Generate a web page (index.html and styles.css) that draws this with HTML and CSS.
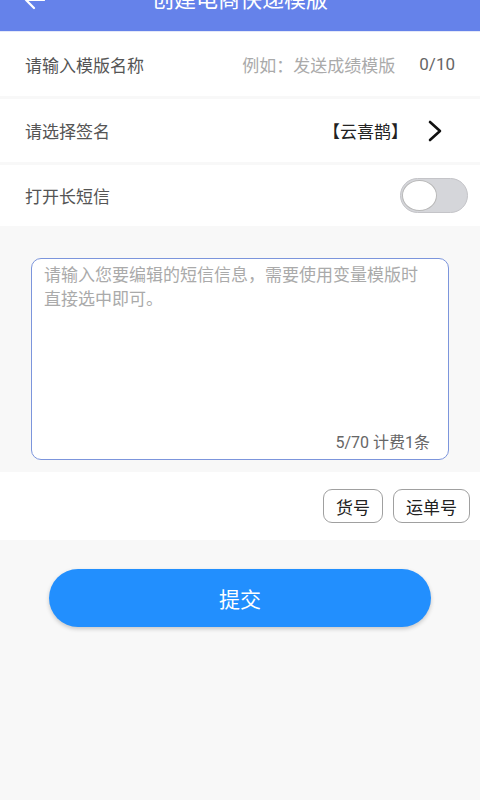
FILE: index.html
```html
<!DOCTYPE html>
<html lang="zh-CN">
<head>
    <meta charset="UTF-8">
    <meta name="viewport" content="width=device-width, initial-scale=1.0">
    <title>创建电商快递模版</title>
    <link rel="stylesheet" href="styles.css">
</head>
<body>
    <header class="top-bar">
        <div class="top-bar-inner">
            <svg class="back-icon" width="22" height="22" viewBox="0 0 22 22">
                <path d="M21 11H3M11 3L3 11L11 19" fill="none" stroke="#fff" stroke-width="2.2" stroke-linecap="round" stroke-linejoin="round"/>
            </svg>
            <h1 class="title">创建电商快递模版</h1>
        </div>
    </header>

    <div class="form-row name-row">
        <span class="row-label">请输入模版名称</span>
        <span class="row-placeholder">例如：发送成绩模版</span>
        <span class="row-count">0/10</span>
    </div>

    <div class="form-row">
        <span class="row-label">请选择签名</span>
        <span class="row-value">【云喜鹊】</span>
        <svg class="chevron" width="16" height="22" viewBox="0 0 16 22">
            <path d="M3 2L13 11L3 20" fill="none" stroke="#111" stroke-width="2.6" stroke-linecap="round" stroke-linejoin="round"/>
        </svg>
    </div>

    <div class="form-row switch-row">
        <span class="row-label">打开长短信</span>
        <div class="switch"><div class="switch-knob"></div></div>
    </div>

    <section class="message-area">
        <div class="message-box">
            <p class="message-placeholder">请输入您要编辑的短信信息，需要使用变量模版时直接选中即可。</p>
            <span class="message-count">5/70 计费1条</span>
        </div>
    </section>

    <div class="tag-row">
        <button class="tag">货号</button>
        <button class="tag">运单号</button>
    </div>

    <div class="submit-wrap">
        <button class="submit">提交</button>
    </div>
</body>
</html>
```

FILE: styles.css
```css
:root {
    --header-color: #6582ea;
    --primary-color: #228ffe;
    --text-color: #555555;
    --muted-color: #aaaaaa;
    --light-bg: #f8f8f8;
    --white: #ffffff;
}

* {
    margin: 0;
    padding: 0;
    box-sizing: border-box;
    font-family: Roboto, "Noto Sans CJK SC", sans-serif;
}

body {
    background-color: var(--light-bg);
    color: var(--text-color);
    min-height: 100vh;
}

.top-bar {
    height: 32px;
    background-color: var(--header-color);
    overflow: hidden;
    display: flex;
    align-items: flex-end;
    border-bottom: 1px solid #e4e8f8;
}

.top-bar-inner {
    width: 100%;
    height: 40px;
    margin-bottom: 11px;
    display: flex;
    align-items: center;
    justify-content: center;
    position: relative;
}

.back-icon {
    position: absolute;
    left: 23px;
    top: 9px;
}

.title {
    color: var(--white);
    font-size: 22px;
    font-weight: 400;
    line-height: 22px;
}

.form-row {
    height: 63px;
    background-color: var(--white);
    display: flex;
    align-items: center;
    padding: 0 25px;
    font-size: 17px;
    margin-bottom: 3px;
}

.name-row {
    height: 64px;
}

.switch-row {
    height: 61px;
    margin-bottom: 0;
}

.row-label {
    flex: 1;
}

.row-placeholder {
    color: var(--muted-color);
    margin-right: 24px;
}

.row-count {
    color: #666666;
}

.row-value {
    color: #222222;
    margin-right: 19px;
}

.chevron {
    margin-right: 12px;
}

.switch {
    width: 68px;
    height: 35px;
    border-radius: 18px;
    background-color: #d5d6da;
    border: 1px solid #c4c4c8;
    margin-right: -13px;
    padding: 1px;
}

.switch-knob {
    width: 35px;
    height: 31px;
    border-radius: 50%;
    background-color: var(--white);
    border: 1px solid #b8b8b8;
}

.message-area {
    padding: 32px 31px 12px;
}

.message-box {
    height: 202px;
    background-color: var(--white);
    border: 1.5px solid #7c95dc;
    border-radius: 10px;
    padding: 4px 18px 6px 12px;
    display: flex;
    flex-direction: column;
    justify-content: space-between;
}

.message-placeholder {
    color: var(--muted-color);
    font-size: 17px;
    line-height: 24px;
}

.message-count {
    align-self: flex-end;
    color: #666666;
    font-size: 16px;
}

.tag-row {
    height: 68px;
    background-color: var(--white);
    display: flex;
    justify-content: flex-end;
    align-items: center;
    gap: 10px;
    padding-right: 10px;
}

.tag {
    height: 34px;
    padding: 0 12px;
    background-color: var(--white);
    border: 1.5px solid #a0a0a0;
    border-radius: 9px;
    color: #222222;
    font-size: 17px;
}

.submit-wrap {
    padding: 29px 49px;
}

.submit {
    width: 100%;
    height: 58px;
    border: none;
    border-radius: 29px;
    background-color: var(--primary-color);
    color: var(--white);
    font-size: 21px;
    box-shadow: 0 2px 4px rgba(0, 0, 0, 0.2);
}
```
